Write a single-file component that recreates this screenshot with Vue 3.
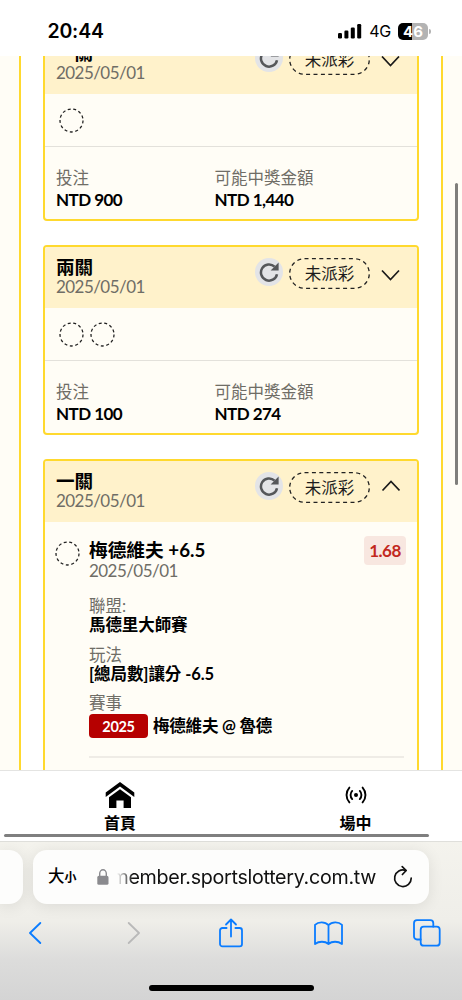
<template>
  <div class="phone">
    <header class="status-bar">
      <span class="clock">20:44</span>
      <div class="status-icons">
        <svg class="signal" width="24" height="16" viewBox="0 0 24 16">
          <rect x="0" y="10" width="4" height="5.5" rx="1.2" />
          <rect x="6.4" y="7.5" width="4" height="8" rx="1.2" />
          <rect x="12.8" y="4.5" width="4" height="11" rx="1.2" />
          <rect x="19.2" y="1" width="4" height="14.5" rx="1.2" />
        </svg>
        <span class="network">4G</span>
        <div class="battery"><span>46</span></div>
        <i class="battery-cap"></i>
      </div>
    </header>

    <main class="page">
      <div class="panel">
        <section v-for="(ticket, i) in tickets" :key="i" class="card" :class="{ open: ticket.open }">
          <div class="card-head">
            <div class="card-title">
              <h3>{{ ticket.name }}</h3>
              <p>2025/05/01</p>
            </div>
            <span class="refresh">
              <svg width="20" height="20" viewBox="0 0 20 20" fill="none">
                <path d="M15.6 4.6A8.1 8.1 0 1 0 18 12.2" stroke="#55575a" stroke-width="2.5" />
                <path d="M19.6 0.6V8.6H11.6Z" fill="#55575a" />
              </svg>
            </span>
            <span class="status">
              <svg width="81" height="31" viewBox="0 0 81 31" fill="none">
                <rect x="0.7" y="0.7" width="79.6" height="29.6" rx="14.8" stroke="#222" stroke-width="1.3" stroke-dasharray="4 3.4" />
              </svg>
              <span>未派彩</span>
            </span>
            <svg class="chevron" width="19" height="12" viewBox="0 0 19 12" fill="none" stroke="#1a1a1a" stroke-width="1.7">
              <path :d="ticket.open ? 'M1.5 10.5L10 1.5L18.5 10.5' : 'M1 1.5L9.5 10.5L18 1.5'" />
            </svg>
          </div>

          <template v-if="!ticket.open">
            <div class="legs">
              <svg v-for="n in ticket.legs" :key="n" class="ring" width="25" height="25" viewBox="0 0 25 25">
                <circle cx="12.5" cy="12.5" r="11.5" />
              </svg>
            </div>
            <div class="amounts">
              <div>
                <label>投注</label>
                <strong>NTD {{ ticket.stake }}</strong>
              </div>
              <div>
                <label>可能中獎金額</label>
                <strong>NTD {{ ticket.payout }}</strong>
              </div>
            </div>
          </template>

          <div v-else class="bet">
            <svg class="ring" width="25" height="25" viewBox="0 0 25 25">
              <circle cx="12.5" cy="12.5" r="11.5" />
            </svg>
            <div class="bet-body">
              <div class="bet-head">
                <div>
                  <h4>梅德維夫 +6.5</h4>
                  <p>2025/05/01</p>
                </div>
                <span class="odds">1.68</span>
              </div>
              <dl>
                <dt>聯盟:</dt>
                <dd>馬德里大師賽</dd>
                <dt>玩法</dt>
                <dd>[總局數]讓分 -6.5</dd>
                <dt>賽事</dt>
                <dd class="match"><span class="tag">2025</span><span>梅德維夫 @ 魯德</span></dd>
              </dl>
              <hr />
            </div>
          </div>
        </section>
      </div>
      <i class="scroll-y"></i>
    </main>

    <nav class="tabs">
      <a>
        <svg width="30" height="28" viewBox="0 0 30 28">
          <path d="M15 1L29.3 11.5V16L15 5.4L0.7 16V11.5Z" />
          <path d="M15 8.2L26 16.3V27H18.6V19.4H11.4V27H4V16.3Z" />
        </svg>
        <span>首頁</span>
      </a>
      <a>
        <svg width="30" height="28" viewBox="0 0 30 28" fill="none" stroke="#000" stroke-width="1.9" stroke-linecap="round">
          <circle cx="15" cy="14" r="2" fill="#000" stroke="none" />
          <path d="M11.2 9.9A6 6 0 0 0 11.2 18.1M18.8 9.9A6 6 0 0 1 18.8 18.1" />
          <path d="M8.4 6.6A11 11 0 0 0 8.4 21.4M21.6 6.6A11 11 0 0 1 21.6 21.4" />
        </svg>
        <span>場中</span>
      </a>
      <i class="scroll-x"></i>
    </nav>

    <footer class="browser">
      <div class="address-row">
        <div class="prev-tab"></div>
        <div class="address">
          <span class="aa">大<small>小</small></span>
          <svg class="lock" width="12" height="16" viewBox="0 0 12 16">
            <path d="M2.7 7.5V4.4A3.3 3.6 0 0 1 9.3 4.4V7.5" fill="none" stroke="#8a8a8e" stroke-width="1.4" />
            <rect x="0.3" y="6.8" width="11.2" height="9" rx="1.6" fill="#8a8a8e" />
          </svg>
          <div class="url"><span>member.sportslottery.com.tw</span></div>
          <svg class="reload" width="20" height="24" viewBox="0 0 20 24" fill="none" stroke="#111" stroke-width="1.7" stroke-linecap="round" stroke-linejoin="round">
            <path d="M12.6 5.4A8.3 8.3 0 1 0 18.2 13.2" />
            <path d="M9.2 1.7L13.2 5.5L9.4 9.5" />
          </svg>
        </div>
      </div>
      <div class="toolbar">
        <svg width="14" height="22" viewBox="0 0 14 22"><path d="M12.3 1L2 11L12.3 21" /></svg>
        <svg class="off" width="14" height="22" viewBox="0 0 14 22"><path d="M1.7 1L12 11L1.7 21" /></svg>
        <svg width="24" height="30" viewBox="0 0 24 30">
          <path d="M7.6 10H3.4A2.4 2.4 0 0 0 1 12.4V26A2.4 2.4 0 0 0 3.4 28.4H20.6A2.4 2.4 0 0 0 23 26V12.4A2.4 2.4 0 0 0 20.6 10H16.4" />
          <path d="M12 18.5V1.5M7 6.5L12 1.5L17 6.5" />
        </svg>
        <svg width="29" height="25" viewBox="0 0 29 25">
          <path d="M14.5 4.2C11 0.4 4.5 0.4 1 3.8V23C5 20 11 20 14.5 23C18 20 24 20 28 23V3.8C24.5 0.4 18 0.4 14.5 4.2V23" />
        </svg>
        <svg width="28" height="28" viewBox="0 0 28 28">
          <rect x="7.7" y="7.7" width="19" height="19" rx="3" />
          <path d="M7.7 20.5H4A3 3 0 0 1 1 17.5V4.2A3 3 0 0 1 4 1.2H17.3A3 3 0 0 1 20.3 4.2V7.7" />
        </svg>
      </div>
      <div class="home-indicator"></div>
    </footer>
  </div>
</template>

<script setup>
const tickets = [
  { name: '一關', legs: 1, stake: '900', payout: '1,440' },
  { name: '兩關', legs: 2, stake: '100', payout: '274' },
  { name: '一關', open: true },
];
</script>

<style>
body { background: #fff; overflow: hidden; }
</style>

<style scoped>
* { box-sizing: border-box; }
h3, h4, p, dl, dd { margin: 0; }

.phone {
  width: 462px;
  height: 1000px;
  overflow: hidden;
  display: flex;
  flex-direction: column;
  font-family: Lato, "Noto Sans CJK TC", sans-serif;
  color: #000;
}

/* STATUS BAR */
.status-bar {
  height: 56px;
  flex: none;
  display: flex;
  justify-content: space-between;
  padding: 18px 31px 0 47.5px;
  font-family: Inter, sans-serif;
}
.clock { font-size: 19.5px; font-weight: 600; line-height: 26px; letter-spacing: -0.2px; }
.status-icons { display: flex; align-items: center; height: 26px; }
.network { font-size: 16px; margin: 0 7px 0 7px; letter-spacing: -0.2px; }
.battery {
  width: 30px;
  height: 17px;
  border-radius: 5px;
  background: linear-gradient(90deg, #000 48%, #b3b3b3 48%);
  color: #fff;
  font-size: 15px;
  font-weight: 700;
  line-height: 17px;
  text-align: center;
}
.battery-cap { width: 2px; height: 5px; margin-left: 1px; border-radius: 0 2px 2px 0; background: #b3b3b3; }

/* PAGE */
.page {
  height: 714px;
  flex: none;
  overflow: hidden;
  position: relative;
  padding: 0 19px;
  background: #fffdf6;
}
.panel {
  height: 900px;
  margin-top: -25px;
  padding: 0 22px;
  background: #fff;
  border: solid #ffd92e;
  border-width: 0 2px;
}
.card {
  height: 190px;
  margin-bottom: 24px;
  border: 2px solid #ffd92e;
  border-radius: 4px;
  background: #fffdf6;
  overflow: hidden;
}
.card.open { height: 420px; }
.card-head {
  height: 61px;
  display: flex;
  align-items: flex-start;
  padding: 9px 17px 0 11px;
  background: #fff2cb;
}
.card-title { flex: 1; }
.card-title h3 { font-size: 18.6px; font-weight: 700; line-height: 22px; }
.card-title p, .bet-head p { font-size: 17px; line-height: 18px; letter-spacing: -0.55px; color: #6f6d66; }
.refresh {
  width: 28px;
  height: 28px;
  margin: 2px 6px 0 0;
  border-radius: 50%;
  background: #e3e4e7;
  display: grid;
  place-items: center;
}
.status { display: grid; margin: 2px 11px 0 0; }
.status > * { grid-area: 1 / 1; }
.status > span { font-size: 16.5px; line-height: 33px; text-align: center; color: #1c1c1c; }
.chevron { margin-top: 13px; }
.open .chevron { margin-top: 10px; }

.ring circle {
  fill: none;
  stroke: #222;
  stroke-width: 1.3;
  stroke-dasharray: 3 2.558;
}
.legs {
  height: 53px;
  display: flex;
  gap: 6px;
  padding: 14px 14px 0;
  border-bottom: 1px solid #e3e1db;
}
.amounts { display: grid; grid-template-columns: 158.5px 1fr; padding: 20px 11px 0; }
.amounts label { display: block; font-size: 16.5px; line-height: 22px; color: #6f6d66; }
.amounts strong { display: block; font-size: 17px; line-height: 22px; letter-spacing: -0.55px; }

/* OPEN TICKET */
.bet { display: flex; padding: 14px 11px 0 10px; }
.bet > .ring { flex: none; margin: 5px 9px 0 0; }
.bet-body { flex: 1; }
.bet-head { display: flex; justify-content: space-between; }
.bet-head h4 { font-size: 18.7px; line-height: 25px; font-weight: 700; padding-top: 2px; }
.bet-head p { margin-top: -1px; }
.odds {
  width: 42px;
  height: 29px;
  border-radius: 4px;
  background: #f8e7e0;
  color: #c2281d;
  font-size: 17px;
  font-weight: 700;
  line-height: 30px;
  letter-spacing: -0.5px;
  text-align: center;
}
dl { margin-top: 16px; }
dt { font-size: 16.5px; line-height: 21px; color: #6f6d66; }
dd { font-size: 16.5px; line-height: 21px; font-weight: 700; margin: -2px 0 8.5px; letter-spacing: -0.08px; }
.match { display: flex; align-items: center; height: 23px; gap: 5px; margin: 0 0 6.5px; }
.match > span:last-child { padding-top: 2px; letter-spacing: -0.2px; }
.tag {
  width: 59px;
  height: 24px;
  border-radius: 4px;
  background: #b60000;
  color: #fff;
  font-size: 14.5px;
  line-height: 25px;
  letter-spacing: -0.3px;
  text-align: center;
}
hr { height: 2px; margin: 19px 2px 0 0; border: 0; background: #efece6; }
.scroll-y { position: absolute; left: 455px; top: 127px; width: 3px; height: 302px; border-radius: 2px; background: #7f7e7b; }

/* TABS */
.tabs {
  height: 71px;
  flex: none;
  position: relative;
  display: flex;
  padding-top: 10px;
  border-top: 1px solid #e4e4e2;
  background: #fff;
}
.tabs a { width: 240px; flex: none; display: flex; flex-direction: column; align-items: center; }
.tabs a + a { width: 231px; }
.tabs a span { font-size: 16px; font-weight: 700; line-height: 24px; margin-top: 2px; }
.scroll-x { position: absolute; left: 4px; top: 63px; width: 425px; height: 3px; border-radius: 2px; background: #7f7f7f; }

/* BROWSER CHROME */
.browser {
  flex: 1;
  border-top: 1px solid #dfdfdb;
  background: linear-gradient(#f4f3ed 0, #efeee9 50%, #dcdcdb 75%, #d4d4d4 100%);
}
.address-row { display: flex; padding-top: 8px; gap: 10px; }
.prev-tab, .address { height: 54px; background: #fdfdfc; box-shadow: 0 2px 16px rgba(0, 0, 0, 0.09); }
.prev-tab { width: 23px; border-radius: 0 14px 14px 0; }
.address { width: 396px; border-radius: 14px; display: flex; align-items: center; padding: 0 16px 0 15px; }
.aa { width: 49px; font-size: 16.5px; font-weight: 500; line-height: 24px; }
.aa small { font-size: 12px; font-weight: 700; }
.url {
  width: 259px;
  margin-left: 8px;
  overflow: hidden;
  display: flex;
  justify-content: flex-end;
  font: 19.7px/28px Inter, sans-serif;
  letter-spacing: -0.3px;
  color: #111;
  mask-image: linear-gradient(90deg, transparent, #000 16px);
}
.reload { margin-left: auto; }
.toolbar {
  height: 58px;
  display: grid;
  grid-template-columns: repeat(5, 98px);
  justify-content: center;
  justify-items: center;
  align-items: center;
  padding-right: 1px;
}
.toolbar svg { fill: none; stroke: #0a7cff; stroke-width: 1.8; stroke-linecap: round; stroke-linejoin: round; }
.toolbar .off { stroke: #b9b9b9; margin-left: 2px; }
.home-indicator { width: 165px; height: 6px; margin: 23px auto 0; border-radius: 3px; background: #000; }
</style>
